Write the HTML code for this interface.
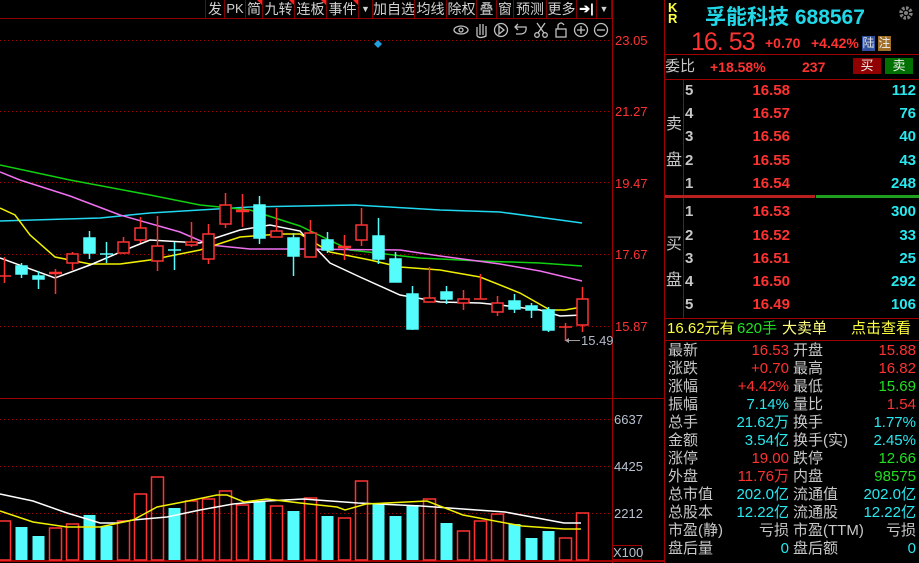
<!DOCTYPE html>
<html><head><meta charset="utf-8"><style>
*{margin:0;padding:0;box-sizing:border-box}
body{width:919px;height:563px;background:#000;overflow:hidden;position:relative;font-family:"Liberation Sans","Noto Sans CJK SC",sans-serif;}
.a{position:absolute;white-space:nowrap}
.tb{position:absolute;top:0;height:18px;color:#d0d0d0;font-size:14px;line-height:18px;text-align:center;border-right:1px solid #800000;white-space:nowrap;overflow:hidden}
.tri{position:absolute;top:0;right:0;width:0;height:0;border-left:5px solid transparent;border-top:5px solid #ff2020}
.g{color:#c8c8c8}.r{color:#ff3232}.c{color:#28e8f0}.gr{color:#20e020}.y{color:#ffff40}
.row{position:absolute;left:665px;width:254px;height:18px;font-size:15px;line-height:18px}
.row span{position:absolute}
</style></head><body>
<svg class="a" style="left:0;top:0" width="919" height="563">
<line x1="0" y1="18.5" x2="612" y2="18.5" stroke="#900000"/>
<line x1="612.5" y1="0" x2="612.5" y2="563" stroke="#a00000"/>
<line x1="664.5" y1="0" x2="664.5" y2="563" stroke="#a00000"/>
<line x1="0" y1="398.5" x2="664" y2="398.5" stroke="#a00000"/>
<line x1="0" y1="561" x2="664" y2="561" stroke="#a00000" stroke-width="2"/>
<g stroke="#a00000" stroke-dasharray="1,3">
<line x1="0" y1="40.5" x2="612" y2="40.5"/><line x1="0" y1="111.5" x2="612" y2="111.5"/>
<line x1="0" y1="182.5" x2="612" y2="182.5"/><line x1="0" y1="254.5" x2="612" y2="254.5"/>
<line x1="0" y1="326.5" x2="612" y2="326.5"/>
<line x1="0" y1="419.5" x2="612" y2="419.5"/><line x1="0" y1="466.5" x2="612" y2="466.5"/><line x1="0" y1="513.5" x2="612" y2="513.5"/>
</g>
<polyline fill="none" stroke="#20d8f0" stroke-width="1.5" points="0,221 100,218 150,213 250,207 300,206 355,205 440,210 500,212 560,220 582,223"/>
<polyline fill="none" stroke="#10d010" stroke-width="1.5" points="0,165 70,180 150,195 200,205 250,210 300,226 350,250 420,258 480,261 540,263 582,266"/>
<polyline fill="none" stroke="#f070f0" stroke-width="1.5" points="0,172 20,180 70,196 120,215 180,232 210,245 250,249 300,249 400,250 440,256 500,264 540,271 582,281"/>
<polyline fill="none" stroke="#f0f000" stroke-width="1.5" points="0,208 15,215 30,235 55,257 90,264 120,264 150,260 200,250 240,237 280,234 300,234 330,252 370,260 400,267 440,270 480,277 520,293 550,310 565,310 582,307"/>
<polyline fill="none" stroke="#ffffff" stroke-width="1.5" points="0,258 55,278 90,265 130,248 150,240 200,243 240,230 270,225 300,231 310,242 330,263 360,277 400,295 440,302 480,303 500,305 540,310 560,316 582,315"/>
<g stroke="#ff3232" stroke-width="1.5" fill="#000">
<line x1="4.5" y1="257" x2="4.5" y2="283"/><line x1="-2" y1="276" x2="11" y2="276"/>
<line x1="55.5" y1="269" x2="55.5" y2="294"/><line x1="49" y1="273" x2="62" y2="273" stroke-width="2.5"/>
<line x1="72.5" y1="252" x2="72.5" y2="270"/><rect x="67" y="254" width="11" height="9"/>
<line x1="123.5" y1="237" x2="123.5" y2="254"/><rect x="118" y="242" width="11" height="11"/>
<line x1="140.5" y1="217" x2="140.5" y2="243"/><rect x="135" y="228" width="11" height="12"/>
<line x1="157.5" y1="216" x2="157.5" y2="271"/><rect x="152" y="246" width="11" height="15"/>
<line x1="191.5" y1="222" x2="191.5" y2="247"/><rect x="186" y="242" width="11" height="3"/>
<line x1="208.5" y1="224" x2="208.5" y2="264"/><rect x="203" y="234" width="11" height="25"/>
<line x1="225.5" y1="193" x2="225.5" y2="228"/><rect x="220" y="205" width="11" height="19"/>
<line x1="242.5" y1="194" x2="242.5" y2="227"/><line x1="236" y1="211" x2="249" y2="211" stroke-width="2.5"/>
<line x1="276.5" y1="208" x2="276.5" y2="237"/><rect x="271" y="231" width="11" height="6"/>
<line x1="310.5" y1="220" x2="310.5" y2="257"/><rect x="305" y="233" width="11" height="24"/>
<line x1="344.5" y1="235" x2="344.5" y2="260"/><line x1="338" y1="247" x2="351" y2="247" stroke-width="2.5"/>
<line x1="361.5" y1="208" x2="361.5" y2="246"/><rect x="356" y="225" width="11" height="15"/>
<line x1="429.5" y1="267" x2="429.5" y2="302"/><rect x="424" y="298" width="11" height="4"/>
<line x1="463.5" y1="290" x2="463.5" y2="310"/><rect x="458" y="299" width="11" height="4"/>
<line x1="480.5" y1="274" x2="480.5" y2="299"/><line x1="474" y1="299" x2="487" y2="299"/>
<line x1="497.5" y1="296" x2="497.5" y2="316"/><rect x="492" y="303" width="11" height="9"/>
<line x1="565.5" y1="323" x2="565.5" y2="341"/><line x1="559" y1="327" x2="572" y2="327"/>
<line x1="582.5" y1="287" x2="582.5" y2="332"/><rect x="577" y="299" width="11" height="26"/>
</g>
<g stroke="#54fcfc" stroke-width="1.5" fill="#54fcfc">
<line x1="21.5" y1="263" x2="21.5" y2="278"/><rect x="16" y="266" width="11" height="8"/>
<line x1="38.5" y1="271" x2="38.5" y2="289"/><rect x="33" y="276" width="11" height="3"/>
<line x1="89.5" y1="231" x2="89.5" y2="259"/><rect x="84" y="238" width="11" height="15"/>
<line x1="106.5" y1="242" x2="106.5" y2="263"/><line x1="100" y1="254" x2="113" y2="254"/>
<line x1="174.5" y1="242" x2="174.5" y2="270"/><line x1="168" y1="250" x2="181" y2="250"/>
<line x1="259.5" y1="196" x2="259.5" y2="244"/><rect x="254" y="205" width="11" height="33"/>
<line x1="293.5" y1="233" x2="293.5" y2="276"/><rect x="288" y="238" width="11" height="18"/>
<line x1="327.5" y1="232" x2="327.5" y2="253"/><rect x="322" y="240" width="11" height="10"/>
<line x1="378.5" y1="218" x2="378.5" y2="264"/><rect x="373" y="236" width="11" height="23"/>
<line x1="395.5" y1="252" x2="395.5" y2="282"/><rect x="390" y="259" width="11" height="23"/>
<line x1="412.5" y1="286" x2="412.5" y2="330"/><rect x="407" y="294" width="11" height="35"/>
<line x1="446.5" y1="286" x2="446.5" y2="304"/><rect x="441" y="292" width="11" height="7"/>
<line x1="514.5" y1="294" x2="514.5" y2="313"/><rect x="509" y="301" width="11" height="8"/>
<line x1="531.5" y1="303" x2="531.5" y2="318"/><rect x="526" y="306" width="11" height="4"/>
<line x1="548.5" y1="307" x2="548.5" y2="332"/><rect x="543" y="310" width="11" height="20"/>
</g>
<line x1="566" y1="340.5" x2="580" y2="340.5" stroke="#a0a0a0"/><polygon points="565,340.5 569,338 569,343" fill="#a0a0a0"/>
<polygon points="378,40 382,44 378,48 374,44" fill="#20a0e0"/>
<g fill="#54fcfc">
<rect x="15.5" y="527" width="12" height="33"/><rect x="32.5" y="536" width="12" height="24"/>
<rect x="83.5" y="515" width="12" height="45"/><rect x="100.5" y="526" width="12" height="34"/>
<rect x="168.5" y="508" width="12" height="52"/><rect x="253.5" y="501" width="12" height="59"/>
<rect x="287.5" y="511" width="12" height="49"/><rect x="321.5" y="516" width="12" height="44"/>
<rect x="372.5" y="504" width="12" height="56"/><rect x="389.5" y="516" width="12" height="44"/>
<rect x="406.5" y="505" width="12" height="55"/><rect x="440.5" y="523" width="12" height="37"/>
<rect x="508.5" y="524" width="12" height="36"/><rect x="525.5" y="538" width="12" height="22"/>
<rect x="542.5" y="531" width="12" height="29"/>
</g>
<g fill="none" stroke="#ff3232" stroke-width="1.5">
<rect x="-1.5" y="521" width="12" height="39"/><rect x="49.5" y="528" width="12" height="32"/>
<rect x="66.5" y="524" width="12" height="36"/><rect x="117.5" y="521" width="12" height="39"/>
<rect x="134.5" y="494" width="12" height="66"/><rect x="151.5" y="477" width="12" height="83"/>
<rect x="185.5" y="501" width="12" height="59"/><rect x="202.5" y="499" width="12" height="61"/>
<rect x="219.5" y="491" width="12" height="69"/><rect x="236.5" y="505" width="12" height="55"/>
<rect x="270.5" y="506" width="12" height="54"/><rect x="304.5" y="498" width="12" height="62"/>
<rect x="338.5" y="518" width="12" height="42"/><rect x="355.5" y="481" width="12" height="79"/>
<rect x="423.5" y="499" width="12" height="61"/><rect x="457.5" y="531" width="12" height="29"/>
<rect x="474.5" y="521" width="12" height="39"/><rect x="491.5" y="514" width="12" height="46"/>
<rect x="559.5" y="538" width="12" height="22"/><rect x="576.5" y="513" width="12" height="47"/>
</g>
<polyline fill="none" stroke="#fff" stroke-width="1.5" points="0,494 33,501 67,513 100,523 117,523 133,520 167,517 200,510 233,504 267,501 303,499 358,503 421,506 505,512 564,523 581,523"/>
<polyline fill="none" stroke="#f0f000" stroke-width="1.5" points="0,511 33,522 67,527 100,527 133,520 157,507 183,502 217,495 227,495 244,502 267,499 300,503 337,507 345,510 366,504 427,501 463,515 522,526 564,529 581,529"/>
<g stroke="#c0c0c0" stroke-width="1.3" fill="none">
<ellipse cx="461" cy="30" rx="7" ry="4"/><circle cx="461" cy="30" r="2"/>
<path d="M477 36 L477 27 M480 35 L480 24 M483 35 L483 24 M486 35 L486 26 M477 36 Q480 39 486 36 L486 31"/>
<circle cx="501" cy="30" r="6.5"/><path d="M499 26 L504 30 L499 34 Z"/>
<path d="M516 27 L526 27 Q527 34 520 34 L516 34 M518 24 L515 27 L518 30"/>
<circle cx="537" cy="35" r="2.3"/><circle cx="545" cy="35" r="2.3"/><path d="M538 33 L545 23 M544 33 L537 23"/>
<rect x="556" y="29" width="10" height="8"/><path d="M558 29 V25 Q561 21 564 25"/>
<circle cx="581" cy="30" r="6.5"/><path d="M577 30 H585 M581 26 V34"/>
<circle cx="601" cy="30" r="6.5"/><path d="M597 30 H605"/>
</g>
<line x1="665" y1="54.5" x2="919" y2="54.5" stroke="#a00000"/>
<line x1="665" y1="79.5" x2="919" y2="79.5" stroke="#a00000"/>
<line x1="683.5" y1="80" x2="683.5" y2="318" stroke="#a00000"/>
<rect x="665" y="195" width="150" height="3" fill="#b82020"/><rect x="816" y="195" width="103" height="3" fill="#20a020"/>
<line x1="665" y1="318.5" x2="919" y2="318.5" stroke="#a00000"/>
<line x1="665" y1="340.5" x2="919" y2="340.5" stroke="#a00000"/>
<circle cx="906" cy="13" r="5" fill="none" stroke="#808080" stroke-width="3.5" stroke-dasharray="2.5,1.4"/>
<circle cx="906" cy="13" r="2" fill="#808080"/>
</svg>

<div class="tb" style="left:205px;width:20px;border-left:1px solid #800000">发</div>
<div class="tb" style="left:225px;width:21px;font-size:13px">PK</div>
<div class="tb" style="left:246px;width:17px">简<i class="tri"></i></div>
<div class="tb" style="left:263px;width:32px">九转<i class="tri"></i></div>
<div class="tb" style="left:295px;width:32px">连板<i class="tri"></i></div>
<div class="tb" style="left:327px;width:32px">事件<i class="tri"></i></div>
<div class="tb" style="left:359px;width:14px;font-size:9px">▼</div>
<div class="tb" style="left:373px;width:42px">加自选</div>
<div class="tb" style="left:415px;width:32px">均线</div>
<div class="tb" style="left:447px;width:30px">除权</div>
<div class="tb" style="left:477px;width:20px">叠</div>
<div class="tb" style="left:497px;width:17px">窗</div>
<div class="tb" style="left:514px;width:33px">预测</div>
<div class="tb" style="left:547px;width:30px">更多</div>
<div class="tb" style="left:577px;width:20px;color:#fff;font-size:13px;font-weight:bold">➔|</div>
<div class="tb" style="left:597px;width:15px;font-size:9px">▼</div>

<div class="a r" style="left:615px;top:33px;font-size:13px">23.05</div>
<div class="a r" style="left:615px;top:104px;font-size:13px">21.27</div>
<div class="a r" style="left:615px;top:176px;font-size:13px">19.47</div>
<div class="a r" style="left:615px;top:247px;font-size:13px">17.67</div>
<div class="a r" style="left:615px;top:319px;font-size:13px">15.87</div>
<div class="a" style="left:581px;top:333px;font-size:13px;color:#b0b8c8">15.49</div>
<div class="a" style="left:614px;top:412px;font-size:13px;color:#b8c0d0">6637</div>
<div class="a" style="left:614px;top:459px;font-size:13px;color:#b8c0d0">4425</div>
<div class="a" style="left:614px;top:506px;font-size:13px;color:#b8c0d0">2212</div>
<div class="a" style="left:612px;top:545px;width:30px;height:15px;border:1px solid #a00000;font-size:13px;line-height:13px;color:#b8c0d0">X100</div>

<div class="a y" style="left:668px;top:2px;font-size:13px;font-weight:bold;line-height:11px">K<br>R</div>
<div class="a c" style="left:705px;top:1px;font-size:21px;font-weight:bold;color:#20d8e8">孚能科技 688567</div>
<div class="a r" style="left:691px;top:28px;font-size:25px;letter-spacing:-1px">16. 53</div>
<div class="a r" style="left:765px;top:35px;font-size:14px;font-weight:bold">+0.70</div>
<div class="a r" style="left:811px;top:35px;font-size:14px;font-weight:bold">+4.42%</div>
<div class="a" style="left:862px;top:36px;width:13px;height:15px;background:#3050a0;color:#e0e0e0;font-size:12px;line-height:15px;text-align:center">陆</div>
<div class="a" style="left:878px;top:36px;width:13px;height:15px;background:#a07028;color:#f0f0f0;font-size:12px;line-height:15px;text-align:center">注</div>

<div class="row" style="top:58px"><span class="g" style="left:0">委比</span><span class="r" style="left:45px;font-size:14px;font-weight:bold">+18.58%</span><span class="r" style="left:137px;font-size:14px;font-weight:bold">237</span></div>
<div class="a" style="left:853px;top:58px;width:28px;height:16px;background:#900000;color:#f0f0f0;font-size:13px;line-height:16px;text-align:center">买</div>
<div class="a" style="left:885px;top:58px;width:28px;height:16px;background:#007000;color:#f0f0f0;font-size:13px;line-height:16px;text-align:center">卖</div>

<div class="a g" style="left:666px;top:110px;font-size:16px">卖</div>
<div class="a g" style="left:666px;top:146px;font-size:16px">盘</div>
<div class="a g" style="left:666px;top:230px;font-size:16px">买</div>
<div class="a g" style="left:666px;top:266px;font-size:16px">盘</div>

<div style="position:absolute;left:0;top:0;font-size:14px;font-weight:bold">
<div class="row" style="top:82px"><span class="g" style="left:20px">5</span><span class="r" style="right:129px">16.58</span><span class="c" style="right:3px">112</span></div>
<div class="row" style="top:105px"><span class="g" style="left:20px">4</span><span class="r" style="right:129px">16.57</span><span class="c" style="right:3px">76</span></div>
<div class="row" style="top:128px"><span class="g" style="left:20px">3</span><span class="r" style="right:129px">16.56</span><span class="c" style="right:3px">40</span></div>
<div class="row" style="top:152px"><span class="g" style="left:20px">2</span><span class="r" style="right:129px">16.55</span><span class="c" style="right:3px">43</span></div>
<div class="row" style="top:175px"><span class="g" style="left:20px">1</span><span class="r" style="right:129px">16.54</span><span class="c" style="right:3px">248</span></div>
<div class="row" style="top:203px"><span class="g" style="left:20px">1</span><span class="r" style="right:129px">16.53</span><span class="c" style="right:3px">300</span></div>
<div class="row" style="top:227px"><span class="g" style="left:20px">2</span><span class="r" style="right:129px">16.52</span><span class="c" style="right:3px">33</span></div>
<div class="row" style="top:250px"><span class="g" style="left:20px">3</span><span class="r" style="right:129px">16.51</span><span class="c" style="right:3px">25</span></div>
<div class="row" style="top:273px"><span class="g" style="left:20px">4</span><span class="r" style="right:129px">16.50</span><span class="c" style="right:3px">292</span></div>
<div class="row" style="top:296px"><span class="g" style="left:20px">5</span><span class="r" style="right:129px">16.49</span><span class="c" style="right:3px">106</span></div>
</div>

<div class="row" style="top:320px;font-size:15px"><span class="y" style="left:2px">16.62元有</span><span class="gr" style="left:72px">620手</span><span class="y" style="left:117px;color:#ffff80">大卖单</span><span class="y" style="left:186px">点击查看</span></div>

<div style="position:absolute;left:0;top:0;">
<div class="row" style="top:342px"><span class="g" style="left:3px">最新</span><span class="r" style="right:130px">16.53</span><span class="g" style="left:128px">开盘</span><span class="r" style="right:3px">15.88</span></div>
<div class="row" style="top:360px"><span class="g" style="left:3px">涨跌</span><span class="r" style="right:130px">+0.70</span><span class="g" style="left:128px">最高</span><span class="r" style="right:3px">16.82</span></div>
<div class="row" style="top:378px"><span class="g" style="left:3px">涨幅</span><span class="r" style="right:130px">+4.42%</span><span class="g" style="left:128px">最低</span><span class="gr" style="right:3px">15.69</span></div>
<div class="row" style="top:396px"><span class="g" style="left:3px">振幅</span><span class="c" style="right:130px">7.14%</span><span class="g" style="left:128px">量比</span><span class="r" style="right:3px">1.54</span></div>
<div class="row" style="top:414px"><span class="g" style="left:3px">总手</span><span class="c" style="right:130px">21.62万</span><span class="g" style="left:128px">换手</span><span class="c" style="right:3px">1.77%</span></div>
<div class="row" style="top:432px"><span class="g" style="left:3px">金额</span><span class="c" style="right:130px">3.54亿</span><span class="g" style="left:128px">换手(实)</span><span class="c" style="right:3px">2.45%</span></div>
<div class="row" style="top:450px"><span class="g" style="left:3px">涨停</span><span class="r" style="right:130px">19.00</span><span class="g" style="left:128px">跌停</span><span class="gr" style="right:3px">12.66</span></div>
<div class="row" style="top:468px"><span class="g" style="left:3px">外盘</span><span class="r" style="right:130px">11.76万</span><span class="g" style="left:128px">内盘</span><span class="gr" style="right:3px">98575</span></div>
<div class="row" style="top:486px"><span class="g" style="left:3px">总市值</span><span class="c" style="right:130px">202.0亿</span><span class="g" style="left:128px">流通值</span><span class="c" style="right:3px">202.0亿</span></div>
<div class="row" style="top:504px"><span class="g" style="left:3px">总股本</span><span class="c" style="right:130px">12.22亿</span><span class="g" style="left:128px">流通股</span><span class="c" style="right:3px">12.22亿</span></div>
<div class="row" style="top:522px"><span class="g" style="left:3px">市盈(静)</span><span class="g" style="right:130px">亏损</span><span class="g" style="left:128px">市盈(TTM)</span><span class="g" style="right:3px">亏损</span></div>
<div class="row" style="top:540px"><span class="g" style="left:3px">盘后量</span><span class="c" style="right:130px">0</span><span class="g" style="left:128px">盘后额</span><span class="c" style="right:3px">0</span></div>
</div>
</body></html>
